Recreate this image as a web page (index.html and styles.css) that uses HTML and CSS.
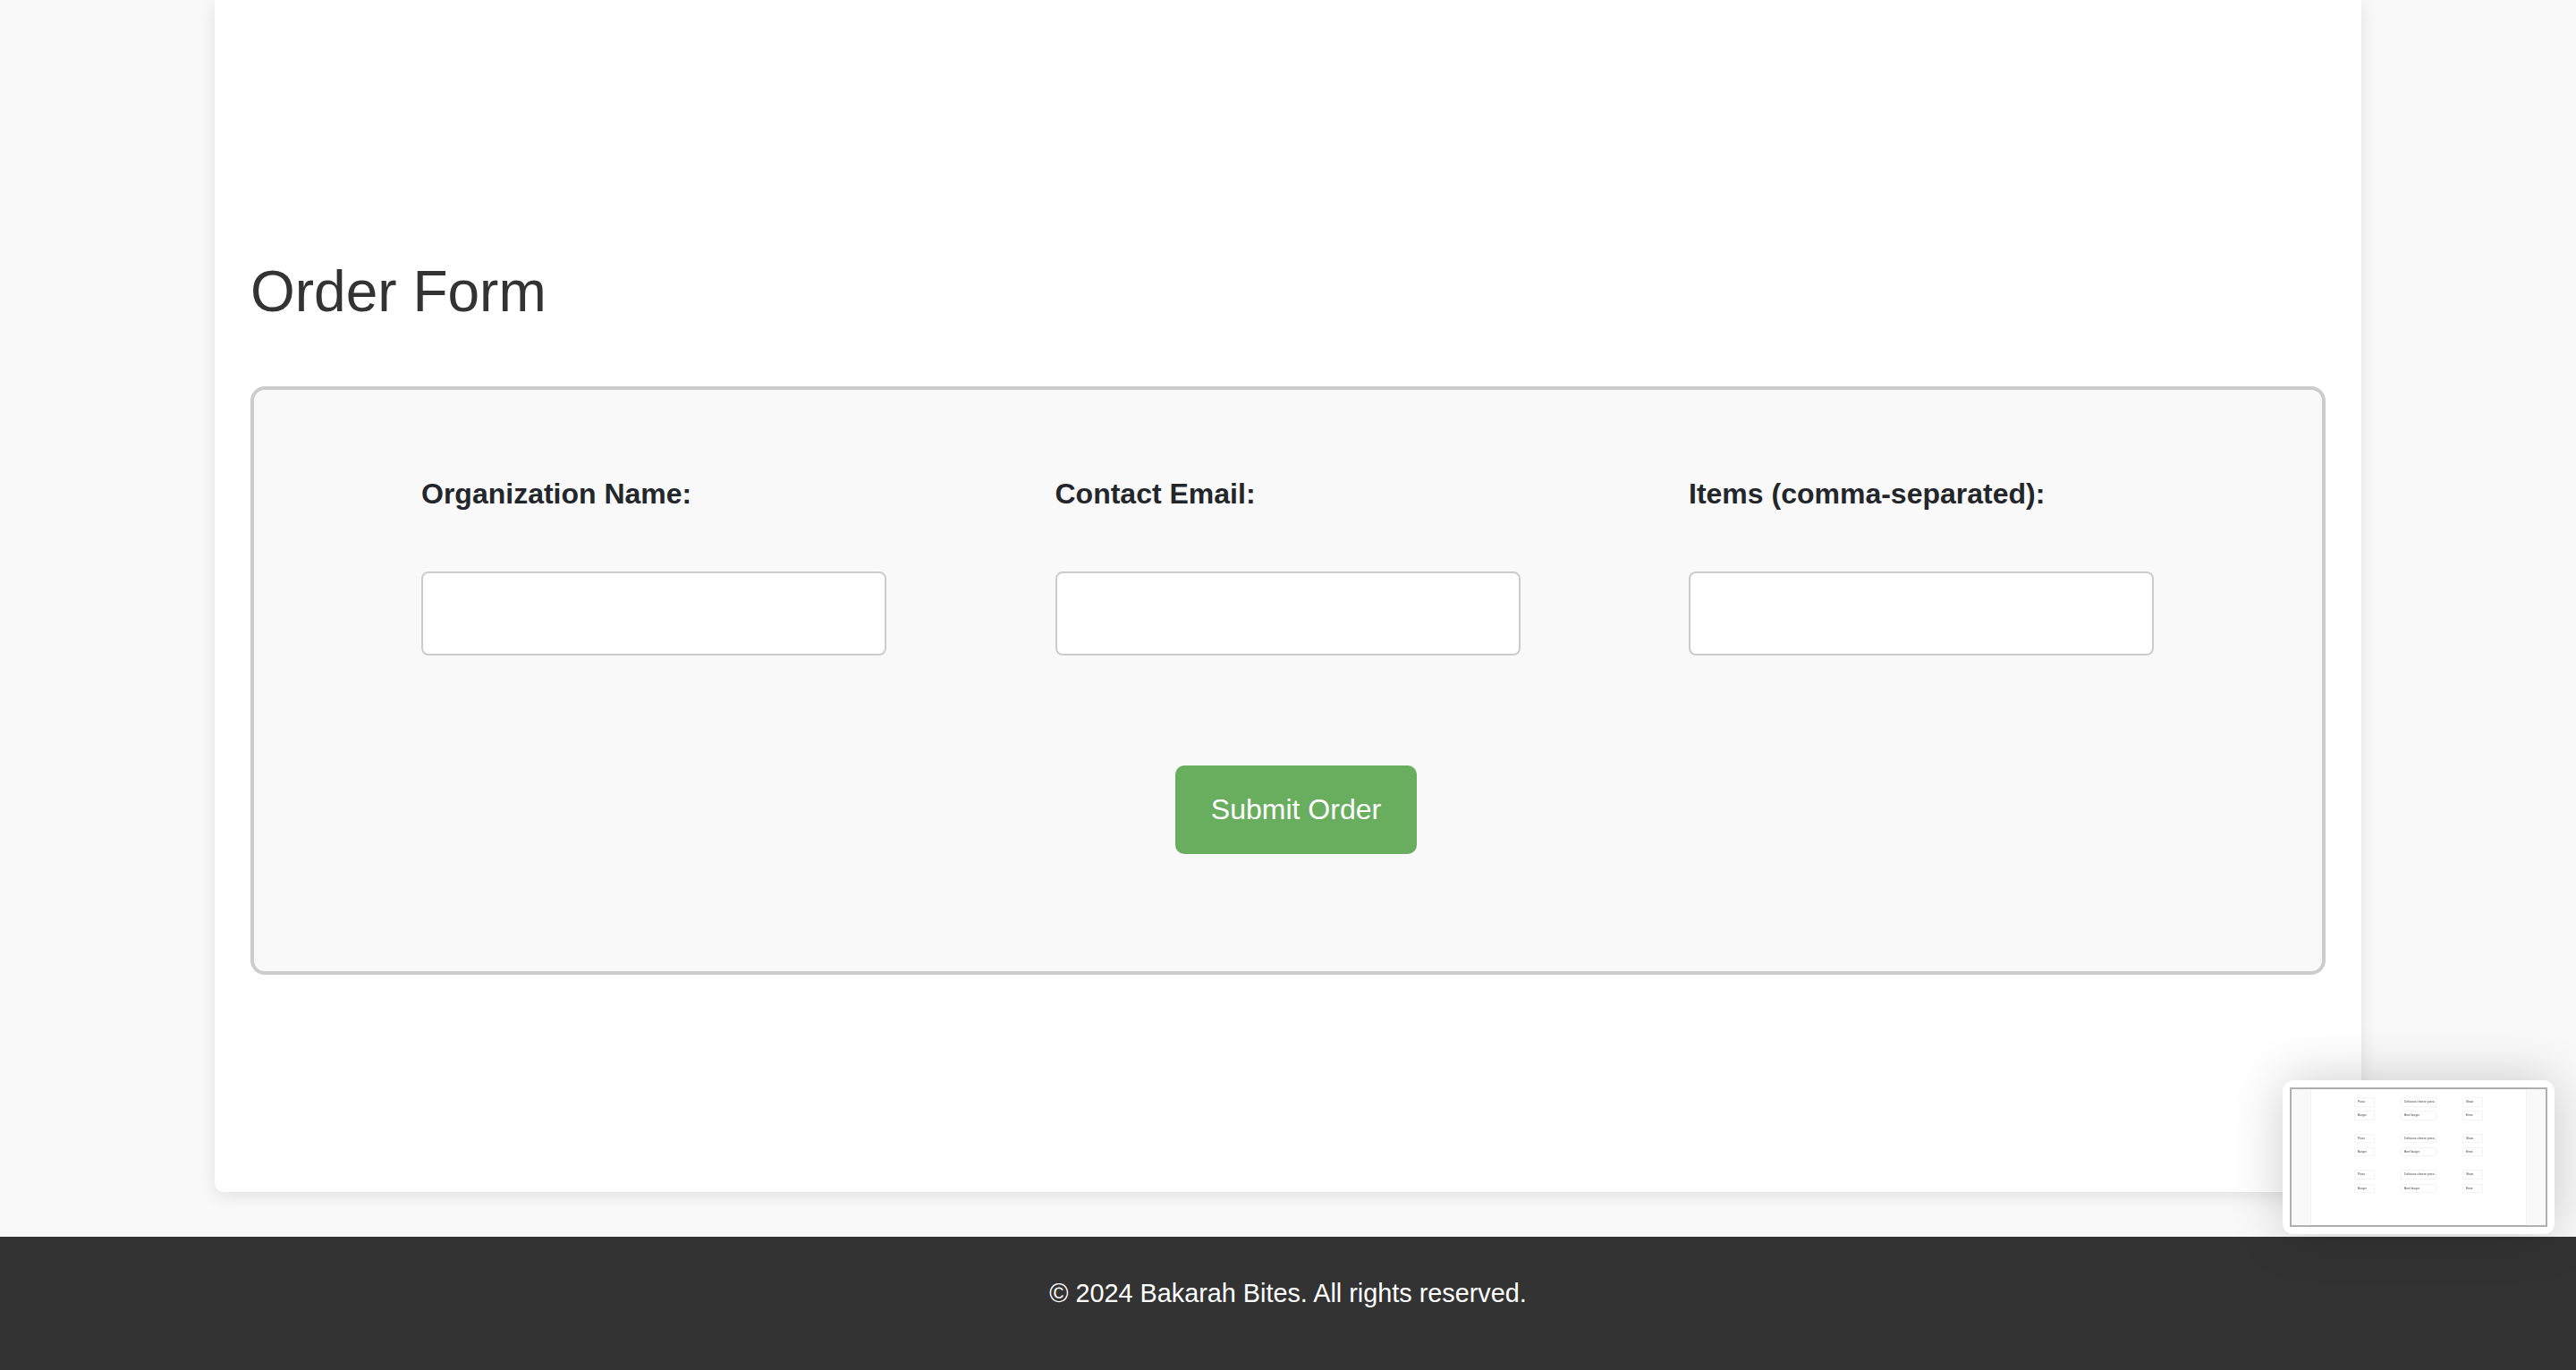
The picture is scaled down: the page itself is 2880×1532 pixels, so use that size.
FILE: index.html
```html
<!DOCTYPE html>
<html lang="en">
<head>
<meta charset="utf-8">
<title>Order Form - Bakarah Bites</title>
<link rel="stylesheet" href="styles.css">
</head>
<body>
<main class="page">
  <section class="card">
    <h1 class="title">Order Form</h1>
    <form class="order-form">
      <div class="fields">
        <div class="field">
          <label class="field-label" for="org">Organization Name:</label>
          <input class="field-input" id="org" type="text">
        </div>
        <div class="field">
          <label class="field-label" for="email">Contact Email:</label>
          <input class="field-input" id="email" type="text">
        </div>
        <div class="field">
          <label class="field-label" for="items">Items (comma-separated):</label>
          <input class="field-input" id="items" type="text">
        </div>
      </div>
      <button class="submit" type="button">Submit Order</button>
    </form>
  </section>
</main>
<footer class="footer">© 2024 Bakarah Bites. All rights reserved.</footer>
<aside class="minimap">
  <div class="mini-frame">
    <div class="mini-page">
      <div class="mini-group">
        <span class="mini-cell c1">Pizza</span><span class="mini-cell c2">Delicious cheese pizza</span><span class="mini-cell c3">Shaw</span>
        <span class="mini-cell c1">Burger</span><span class="mini-cell c2">Beef burger</span><span class="mini-cell c3">Ernie</span>
      </div>
      <div class="mini-group">
        <span class="mini-cell c1">Pizza</span><span class="mini-cell c2">Delicious cheese pizza</span><span class="mini-cell c3">Shaw</span>
        <span class="mini-cell c1">Burger</span><span class="mini-cell c2">Beef burger</span><span class="mini-cell c3">Ernie</span>
      </div>
      <div class="mini-group">
        <span class="mini-cell c1">Pizza</span><span class="mini-cell c2">Delicious cheese pizza</span><span class="mini-cell c3">Shaw</span>
        <span class="mini-cell c1">Burger</span><span class="mini-cell c2">Beef burger</span><span class="mini-cell c3">Ernie</span>
      </div>
    </div>
  </div>
</aside>
</body>
</html>
```
FILE: styles.css
```css
* { box-sizing: border-box; }
html, body { margin: 0; height: 1532px; overflow: hidden; }
body {
  background: #f9f9f9;
  font-family: "Liberation Sans", Arial, sans-serif;
  color: #333;
  position: relative;
}
.page { display: flex; justify-content: center; height: 1383px; }
.card {
  width: 2400px;
  height: 1333px;
  padding: 289px 40px 0;
  background: #fff;
  border-radius: 0 0 10px 10px;
  box-shadow: 0 4px 20px rgba(0, 0, 0, 0.1);
}
.title {
  margin: 0 0 69px;
  font-size: 64px;
  font-weight: 400;
  color: #333;
}
.order-form {
  height: 658px;
  padding-top: 98px;
  display: flex;
  flex-direction: column;
  align-items: center;
  background: #f9f9f9;
  border: 4px solid #ccc;
  border-radius: 16px;
}
.fields { display: flex; gap: 188.5px; margin-right: 1px; }
.field { display: flex; flex-direction: column; width: 520px; }
.field-label {
  margin-bottom: 68px;
  font-size: 32px;
  font-weight: 700;
  color: #23262b;
}
.field-input {
  height: 94px;
  background: #fff;
  border: 2px solid #ccc;
  border-radius: 8px;
}
.submit {
  margin: 123px 0 0 18px;
  padding: 31px 40px;
  background: #69ae5f;
  color: #fff;
  border: 0;
  border-radius: 10px;
  font-family: inherit;
  font-size: 32px;
}
.footer {
  height: 149px;
  padding-top: 47px;
  background: #333;
  color: #fff;
  font-size: 28.8px;
  text-align: center;
}
.minimap {
  position: absolute;
  left: 2552px;
  top: 1208px;
  width: 304px;
  height: 172px;
  padding: 8px;
  background: #fff;
  border-radius: 12px;
  box-shadow: 0 0 60px rgba(0, 0, 0, 0.2);
}
.mini-frame {
  height: 156px;
  padding: 0 22px;
  background: #f9f9f9;
  border: 2px solid #b0b0b0;
  filter: blur(0.3px);
}
.mini-page {
  height: 100%;
  padding-top: 9px;
  background: #fff;
  box-shadow: 0 0 2px rgba(0, 0, 0, 0.08);
  filter: blur(0.4px);
}
.mini-group {
  display: grid;
  grid-template-columns: 23px 40px 23px;
  column-gap: 29px;
  row-gap: 4.8px;
  justify-content: center;
  margin-bottom: 14.9px;
}
.mini-cell {
  height: 10.5px;
  padding-left: 3px;
  border: 0.5px solid #f4f4f4;
  font-size: 3.3px;
  line-height: 9.5px;
  color: #444;
  white-space: nowrap;
}
```
